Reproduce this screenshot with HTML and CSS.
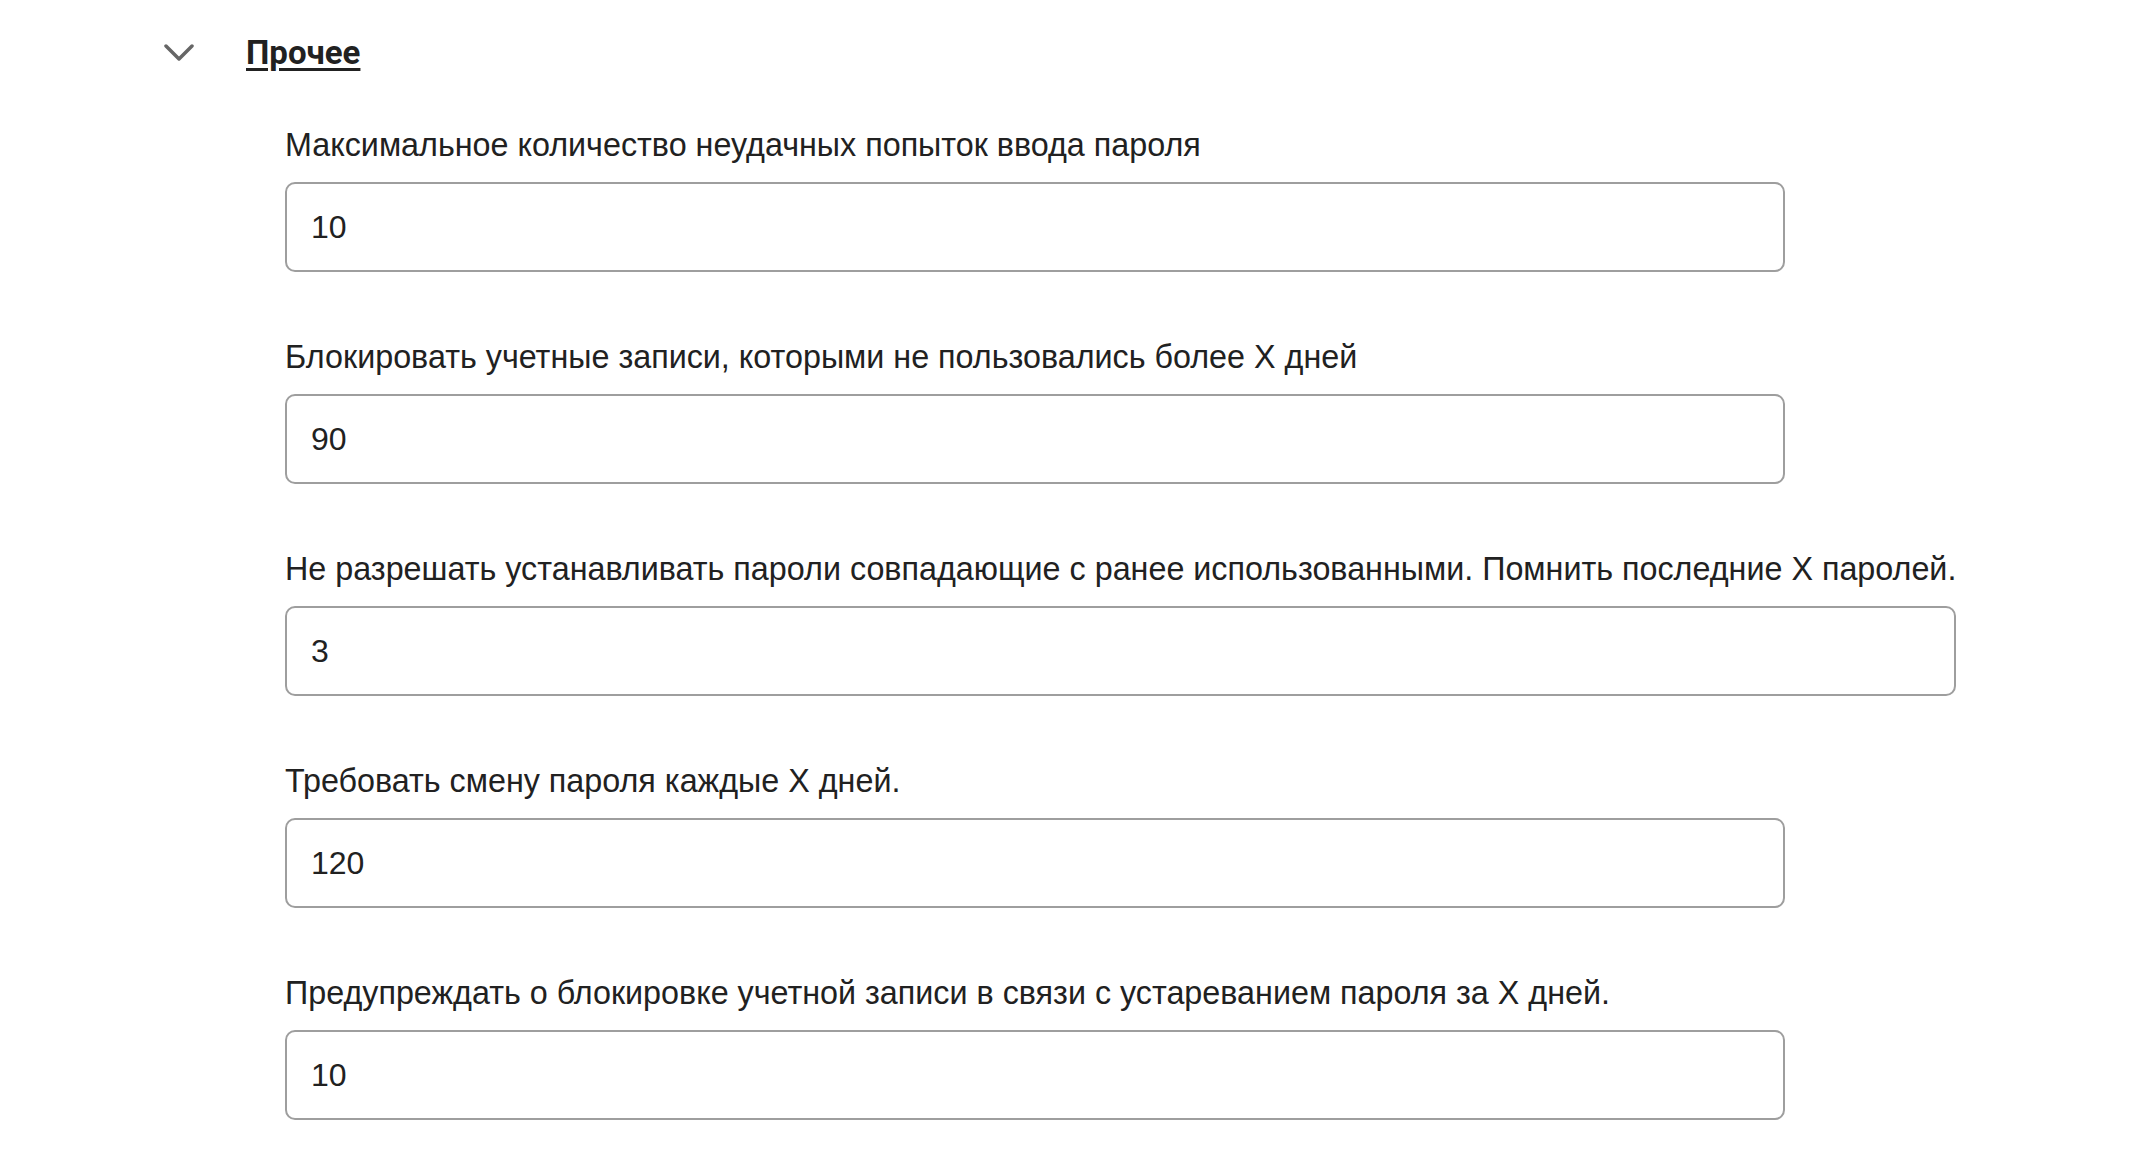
FILE: index.html
```html
<!DOCTYPE html>
<html lang="ru">
<head>
    <meta charset="UTF-8">
    <title>Прочее</title>
    <link rel="stylesheet" href="styles.css">
</head>
<body>

<section class="group">
    <div class="group-head">
        <svg class="chevron" width="30" height="18" viewBox="0 0 30 18">
            <polyline points="2,2 15,15 28,2" fill="none" stroke="#666" stroke-width="3.5" stroke-linecap="round" stroke-linejoin="round"/>
        </svg>
        <a class="group-title" href="#">Прочее</a>
    </div>

    <div class="fields">
        <div class="field">
            <label for="f1">Максимальное количество неудачных попыток ввода пароля</label>
            <input id="f1" class="input" type="text" value="10">
        </div>
        <div class="field">
            <label for="f2">Блокировать учетные записи, которыми не пользовались более X дней</label>
            <input id="f2" class="input" type="text" value="90">
        </div>
        <div class="field">
            <label for="f3">Не разрешать устанавливать пароли совпадающие с ранее использованными. Помнить последние X паролей.</label>
            <input id="f3" class="input" type="text" value="3">
        </div>
        <div class="field">
            <label for="f4">Требовать смену пароля каждые X дней.</label>
            <input id="f4" class="input" type="text" value="120">
        </div>
        <div class="field">
            <label for="f5">Предупреждать о блокировке учетной записи в связи с устареванием пароля за X дней.</label>
            <input id="f5" class="input" type="text" value="10">
        </div>
    </div>
</section>

</body>
</html>
```

FILE: styles.css
```css
* {
    box-sizing: border-box;
}
body {
    margin: 0;
    background-color: #fff;
    color: #212121;
    font-family: "Liberation Sans", Arial, sans-serif;
}
.group {
    padding: 33px 0 0 164px;
}
.group-head {
    display: flex;
    align-items: center;
    height: 40px;
}
.chevron {
    display: block;
    margin-right: 52px;
}
.group-title {
    color: #212121;
    font-family: Roboto, "Liberation Sans", sans-serif;
    font-size: 33px;
    font-weight: 700;
    line-height: 40px;
    text-decoration: underline;
    text-decoration-thickness: 3px;
    text-underline-offset: 4px;
}
.fields {
    display: flex;
    flex-direction: column;
    align-items: flex-start;
    gap: 67px;
    margin: 54px 0 0 121px;
}
.field {
    display: flex;
    flex-direction: column;
    width: max-content;
    min-width: 1500px;
}
.field label {
    font-size: 32.3px;
    line-height: 36px;
    margin-bottom: 19px;
    white-space: nowrap;
}
.input {
    width: 100%;
    height: 90px;
    padding: 0 24px;
    border: 2px solid #9e9e9e;
    border-radius: 10px;
    font-family: "Liberation Sans", Arial, sans-serif;
    font-size: 32px;
    color: #212121;
    background-color: #fff;
    outline: none;
}
```
